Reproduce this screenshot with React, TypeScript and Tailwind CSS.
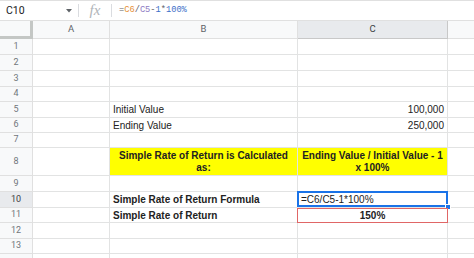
import { ReactNode } from "react";

interface RowSpec {
  num: number;
  height: string;
  b?: ReactNode;
  c?: ReactNode;
  yellow?: boolean;
  active?: boolean;
  outlined?: boolean;
  hideNum?: boolean;
}

const rows: RowSpec[] = [
  { num: 1, height: "h-[16px]" },
  { num: 2, height: "h-[16px]" },
  { num: 3, height: "h-[16px]" },
  { num: 4, height: "h-[15px]" },
  { num: 5, height: "h-[16px]", b: "Initial Value", c: "100,000" },
  { num: 6, height: "h-[15px]", b: "Ending Value", c: "250,000" },
  { num: 7, height: "h-[15px]" },
  {
    num: 8,
    height: "h-[28px]",
    yellow: true,
    b: "Simple Rate of Return is Calculated as:",
    c: "Ending Value / Initial Value - 1 x 100%",
  },
  { num: 9, height: "h-[16px]" },
  {
    num: 10,
    height: "h-[16px]",
    active: true,
    b: "Simple Rate of Return Formula",
    c: "=C6/C5-1*100%",
  },
  {
    num: 11,
    height: "h-[15px]",
    outlined: true,
    b: "Simple Rate of Return",
    c: "150%",
  },
  { num: 12, height: "h-[16px]" },
  { num: 13, height: "h-[15px]" },
  // only the top sliver of row 14 is on screen
  { num: 14, height: "h-[16px]", hideNum: true },
];

// Cell text for column B / C depending on row type
const renderB = (row: RowSpec) => {
  if (!row.b) return null;
  if (row.yellow) {
    return (
      <span className="w-full text-center font-bold leading-[12px] px-[8px]">
        {row.b}
      </span>
    );
  }
  const bold = row.num >= 10;
  return (
    <span className={`pl-[3px] whitespace-nowrap ${bold ? "font-bold" : ""}`}>
      {row.b}
    </span>
  );
};

const renderC = (row: RowSpec) => {
  if (!row.c) return null;
  if (row.yellow) {
    return (
      <span className="w-full text-center font-bold leading-[12px] px-[1px]">
        {row.c}
      </span>
    );
  }
  if (row.active) {
    return <span className="pl-[3px] whitespace-nowrap">{row.c}</span>;
  }
  if (row.outlined) {
    return (
      <span className="w-full text-center font-bold whitespace-nowrap">
        {row.c}
      </span>
    );
  }
  return (
    <span className="w-full text-right pr-[3px] whitespace-nowrap">
      {row.c}
    </span>
  );
};

const FormulaBar = () => (
  <div className="flex items-center h-[21px] border-t border-b border-[#e0e0e0] bg-white">
    <div className="flex items-center justify-between w-[78px] pl-[6px] pr-[6px]">
      <span className="text-[10.5px] text-[#202124] font-['Roboto','Liberation_Sans',sans-serif]">
        C10
      </span>
      <svg width="6" height="4" viewBox="0 0 6 4" className="mt-[1px]">
        <path d="M0 0 L6 0 L3 3.5 Z" fill="#5f6368" />
      </svg>
    </div>
    <div className="w-px h-[13px] bg-[#dadce0]" />
    <div className="w-[32px] flex items-center justify-center">
      <span className="text-[15px] italic text-[#b0b4b8] font-['Liberation_Serif',serif] leading-none">
        fx
      </span>
    </div>
    <div className="w-px h-[13px] bg-[#dadce0]" />
    <div className="pl-[7px] text-[8.7px] font-['Liberation_Mono',monospace] text-[#5f6368] whitespace-nowrap">
      =<span className="text-[#e69138]">C6</span>/
      <span className="text-[#8e7cc3]">C5</span>-
      <span className="text-[#3d6fc9]">1</span>*
      <span className="text-[#3d6fc9]">100%</span>
    </div>
  </div>
);

const HeaderRow = () => (
  <div className="flex h-[18px] bg-[#f8f9fa] text-[9.5px] text-[#5f6368] font-['Roboto','Liberation_Sans',sans-serif]">
    <div className="w-[33px] shrink-0 border-r-[3px] border-b-[3px] border-[#c4c7c5]" />
    <div className="w-[77px] shrink-0 flex items-center justify-center border-r border-b border-[#e0e0e0]">
      A
    </div>
    <div className="w-[188px] shrink-0 flex items-center justify-center border-r border-b border-[#e0e0e0]">
      B
    </div>
    <div className="w-[150px] shrink-0 flex items-center justify-center border-r border-b border-[#c8c8c8] bg-[#e8eaed] text-[#3c4043]">
      C
    </div>
    <div className="flex-1 border-b border-[#e0e0e0]" />
  </div>
);

export default function App() {
  return (
    <div className="w-[474px] h-[258px] overflow-hidden bg-white font-['Liberation_Sans',Arial,sans-serif] text-[10px] text-[#222222]">
      <FormulaBar />
      <HeaderRow />
      {rows.map((row) => (
        <div key={row.num} className={`flex ${row.height}`}>
          <div
            className={`w-[33px] shrink-0 flex items-center justify-center border-r border-b border-[#e0e0e0] text-[9px] font-['Roboto','Liberation_Sans',sans-serif] ${
              row.active
                ? "bg-[#e8eaed] text-[#3c4043]"
                : "bg-[#f8f9fa] text-[#70757a]"
            }`}
          >
            {row.hideNum ? null : row.num}
          </div>
          <div className="w-[77px] shrink-0 border-r border-b border-[#e2e3e3]" />
          <div
            className={`w-[188px] shrink-0 flex items-center border-r border-b border-[#e2e3e3] ${
              row.yellow ? "bg-[#ffff00]" : ""
            }`}
          >
            {renderB(row)}
          </div>
          <div
            className={`relative w-[150px] shrink-0 flex items-center border-r border-b border-[#e2e3e3] ${
              row.yellow ? "bg-[#ffff00]" : ""
            }`}
          >
            {renderC(row)}
            {row.active && (
              <>
                <div className="absolute -left-px -top-px right-[-1px] bottom-0 border-2 border-[#1a73e8] pointer-events-none" />
                <div className="absolute right-[-4px] bottom-[-3px] w-[6px] h-[6px] bg-[#1a73e8] border border-white" />
              </>
            )}
            {row.outlined && (
              <div className="absolute -left-px top-0 right-[-1px] bottom-[-1px] border border-[#e06666] pointer-events-none" />
            )}
          </div>
          <div className="flex-1 border-b border-[#e2e3e3]" />
        </div>
      ))}
    </div>
  );
}
